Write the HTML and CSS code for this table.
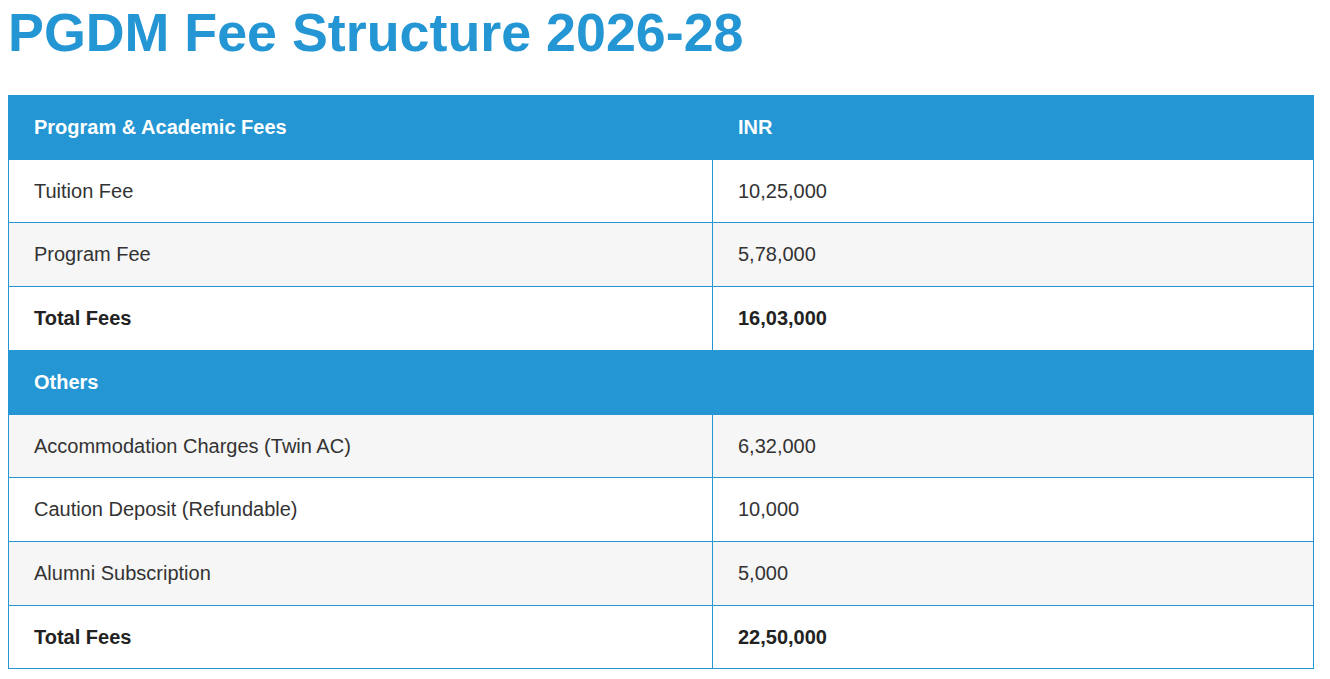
FILE: index.html
```html
<!DOCTYPE html>
<html>
<head>
<meta charset="utf-8">
<link rel="stylesheet" href="styles.css">
</head>
<body>
<div class="page">
  <h1 class="title">PGDM Fee Structure 2026-28</h1>
  <table class="fees">
    <colgroup><col class="c1"><col class="c2"></colgroup>
    <tr class="head"><td>Program &amp; Academic Fees</td><td>INR</td></tr>
    <tr><td>Tuition Fee</td><td>10,25,000</td></tr>
    <tr class="alt"><td>Program Fee</td><td>5,78,000</td></tr>
    <tr class="total"><td>Total Fees</td><td>16,03,000</td></tr>
    <tr class="head"><td colspan="2">Others</td></tr>
    <tr class="alt"><td>Accommodation Charges (Twin AC)</td><td>6,32,000</td></tr>
    <tr><td>Caution Deposit (Refundable)</td><td>10,000</td></tr>
    <tr class="alt"><td>Alumni Subscription</td><td>5,000</td></tr>
    <tr class="total"><td>Total Fees</td><td>22,50,000</td></tr>
  </table>
</div>
</body>
</html>
```
FILE: styles.css
```css
html, body { margin: 0; padding: 0; background: #fff; }
.page { padding: 2px 8px 0 8px; font-family: "Liberation Sans", Arial, sans-serif; }
.title { margin: 0 0 33px 0; font-size: 53.8px; line-height: 60px; font-weight: bold; color: #2396d3; }
.fees { width: 1306px; border-collapse: collapse; border: 1px solid #2396d3; }
.fees .c1 { width: 704px; }
.fees td { border: 1px solid #2396d3; padding: 20px 25px; font-size: 20px; line-height: 22.7px; color: #333; text-align: left; }
.fees .head td { background: #2396d3; color: #fff; font-weight: bold; }
.fees .alt td { background: #f6f6f6; }
.fees .total td { font-weight: bold; color: #222; }
```
